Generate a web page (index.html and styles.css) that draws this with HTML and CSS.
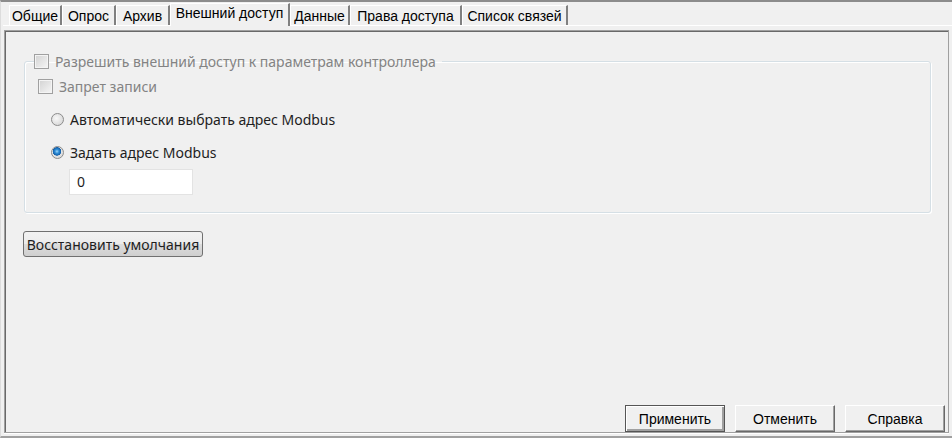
FILE: index.html
```html
<!DOCTYPE html>
<html lang="ru">
<head>
<meta charset="utf-8">
<title>Внешний доступ</title>
<link rel="stylesheet" href="styles.css">
</head>
<body>
<div class="window">
  <div class="tabs">
    <div class="tab t1">Общие</div>
    <div class="tab t2">Опрос</div>
    <div class="tab t3">Архив</div>
    <div class="tab t4 active">Внешний доступ</div>
    <div class="tab t5">Данные</div>
    <div class="tab t6">Права доступа</div>
    <div class="tab t7">Список связей</div>
  </div>
  <div class="panel">
    <div class="content">
      <fieldset class="group">
        <legend class="legend"><span class="cb"></span><span class="dis">Разрешить внешний доступ к параметрам контроллера</span></legend>
        <div class="row row-cb"><span class="cb"></span><span class="dis">Запрет записи</span></div>
        <div class="row row-rb"><span class="rb"></span><span>Автоматически выбрать адрес Modbus</span></div>
        <div class="row row-rb"><span class="rb on"></span><span>Задать адрес Modbus</span></div>
        <div class="field">0</div>
      </fieldset>
      <button class="restore">Восстановить умолчания</button>
    </div>
    <div class="actions">
      <button class="btn default">Применить</button>
      <button class="btn">Отменить</button>
      <button class="btn">Справка</button>
    </div>
  </div>
</div>
</body>
</html>
```

FILE: styles.css
```css
html, body {
  margin: 0;
  padding: 0;
  background: #f0f0f0;
}
.window {
  width: 952px;
  height: 438px;
  box-sizing: border-box;
  border-top: 2px solid #8c8c8c;
  border-left: 1px solid #dcdcdc;
  border-bottom: 2px solid #a0a0a0;
  display: flex;
  flex-direction: column;
  background: #f0f0f0;
}
.tabs {
  display: flex;
  align-items: flex-end;
  height: 23px;
  padding-left: 6px;
  margin-left: 2px;
  border-bottom: 1px solid #ffffff;
  font-family: "Liberation Sans", Arial, sans-serif;
  font-size: 14px;
  color: #000;
}
.tab {
  height: 20px;
  box-sizing: border-box;
  padding: 2px 0 0 0;
  border-left: 1px solid #ffffff;
  border-top: 1px solid #ffffff;
  border-right: 2px solid #808080;
  line-height: 16px;
  white-space: nowrap;
  text-align: center;
}
.t1 { width: 53px; }
.t2 { width: 54px; }
.t3 { width: 54px; }
.t4 { width: 120px; }
.t5 { width: 60px; }
.t6 { width: 112px; }
.t7 { width: 106px; }
.tab.active {
  height: 23px;
  margin-bottom: -1px;
  padding-top: 1px;
  background: #f0f0f0;
  position: relative;
}
.panel {
  flex: 1;
  margin: 4px 3px 3px 3px;
  border: 1px solid #a0a0a0;
  box-shadow: inset 1px 1px 0 #696969, 0 1px 0 #ffffff;
  display: flex;
  flex-direction: column;
  padding: 1px 0 0 1px;
}
.content {
  flex: 1;
  padding: 19px 17px 0 18px;
  font-family: "Noto Sans", "Open Sans", sans-serif;
  font-size: 14px;
  color: #1e1e1e;
}
.group {
  margin: 0;
  padding: 0 0 0 13px;
  height: 162px;
  box-sizing: border-box;
  border: 1px solid #d5dfe5;
  border-radius: 3px;
  box-shadow: inset 1px 1px 0 #ffffff, 1px 1px 0 #ffffff;
}
.legend {
  padding: 0 6px 0 0;
  margin-left: -4px;
  display: flex;
  align-items: center;
  gap: 6px;
  height: 20px;
}
.dis {
  color: #838383;
}
.row {
  display: flex;
  align-items: center;
  gap: 6px;
  height: 20px;
}
.row-cb {
  margin-top: 5px;
}
.row-rb {
  margin-top: 13px;
  padding-left: 13px;
}
.cb {
  width: 15px;
  height: 15px;
  box-sizing: border-box;
  border: 1px solid #a0a0a0;
  background: linear-gradient(135deg, #d2d2d2, #f6f6f6);
  box-shadow: inset 0 0 0 1px #f4f4f4;
  flex: none;
}
.rb {
  width: 13px;
  height: 13px;
  box-sizing: border-box;
  border-radius: 50%;
  border: 1px solid #8c8c8c;
  background: radial-gradient(circle at 40% 40%, #f8f8f8, #d0d0d0);
  flex: none;
}
.rb.on {
  background:
    radial-gradient(circle at 45% 40%, #9fd6f7 0, #2f8ed8 2px, #145fa8 4px, transparent 4.5px),
    radial-gradient(circle at 40% 40%, #f8f8f8, #d0d0d0);
}
.field {
  margin: 7px 0 0 31px;
  width: 124px;
  height: 26px;
  box-sizing: border-box;
  background: #ffffff;
  border: 1px solid #e3e3e3;
  padding: 0 7px;
  line-height: 24px;
  font-size: 14px;
}
.restore {
  margin: 18px 0 0 -1px;
  width: 180px;
  height: 26px;
  padding: 0;
  border: 1px solid #707070;
  border-radius: 3px;
  background: linear-gradient(#f2f2f2 0%, #ebebeb 50%, #dddddd 51%, #cfcfcf 100%);
  font-family: "Noto Sans", "Open Sans", sans-serif;
  font-size: 14px;
  color: #1e1e1e;
}
.actions {
  display: flex;
  justify-content: flex-end;
  gap: 10px;
  padding-right: 3px;
}
.btn {
  width: 100px;
  height: 27px;
  padding: 0;
  background: #f0f0f0;
  border: 1px solid;
  border-color: #ffffff #696969 #696969 #ffffff;
  box-shadow: inset -1px -1px 0 #a0a0a0;
  font-family: "Liberation Sans", Arial, sans-serif;
  font-size: 14px;
  color: #000;
}
.btn.default {
  border-color: #555555;
  box-shadow: inset 1px 1px 0 #ffffff, inset -2px -2px 0 #a0a0a0;
}
```
